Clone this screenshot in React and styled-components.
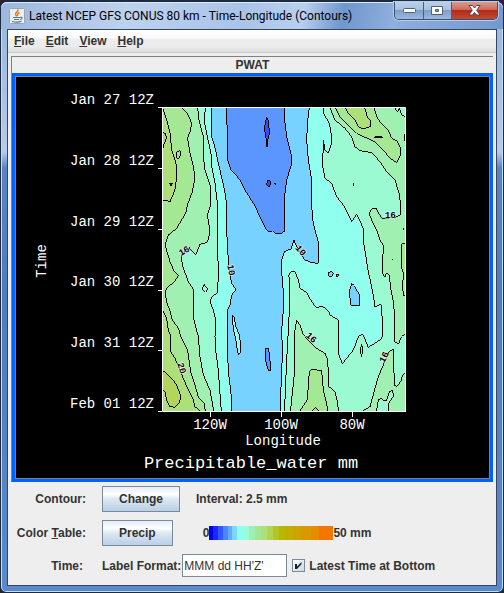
import React from "react";
import styled, { createGlobalStyle } from "styled-components";

const GlobalStyle = createGlobalStyle`
  * { box-sizing: border-box; }
  body { margin: 0; background: #26262c; }
  button, input { font: inherit; color: inherit; }
`;

const WindowFrame = styled.div`
  display: flex;
  flex-direction: column;
  min-height: 100vh;
  padding: 0 6px 6px;
  border: 1px solid #1c2a42;
  border-top-width: 2px;
  border-radius: 8px 8px 6px 6px;
  background: linear-gradient(180deg, #b5cbea 0, #9db9e0 30px, #b3cbea 150px, #5a84c0 166px, #4f7cbd 50%, #5c89ca 100%);
  box-shadow: inset 0 0 0 1px #c5dcf5;
  font: bold 12px/16px "Liberation Sans", Arial, sans-serif;
  color: #333;
`;

const TitleBar = styled.header`
  display: flex;
  align-items: center;
  height: 27px;
  margin: 0 -6px;
  padding-left: 8px;
  border-radius: 6px 6px 0 0;
  background: linear-gradient(100deg, #9db6dd 0%, #bdd2ee 25%, #a9c4e9 48%, #b9cfee 60%, #6f96cf 68%, #8fafdc 78%, #7399cf 100%);
  box-shadow: inset 0 1px 0 #dceafa;
`;

const Title = styled.h1`
  flex: 1;
  margin: 0 0 0 4px;
  overflow: hidden;
  white-space: nowrap;
  font: 12px/16px Roboto, "Noto Sans", sans-serif;
  color: #000;
`;

const WindowButtons = styled.div`
  display: flex;
  align-self: flex-start;
  height: 18px;
  margin-right: 5px;
  overflow: hidden;
  border: 1px solid #39506f;
  border-top: 0;
  border-radius: 0 0 5px 5px;
  box-shadow: 0 0 0 1px #b4cdec;
`;

const WindowButton = styled.button`
  display: flex;
  align-items: center;
  justify-content: center;
  width: ${(p) => (p.$close ? 46 : 28)}px;
  padding: 0;
  border: 0;
  border-left: ${(p) => (p.$first ? "0" : "1px solid #465f83")};
  background: ${(p) =>
    p.$close
      ? "linear-gradient(#dc9b90 0, #cd6a58 45%, #b32a18 50%, #c24b2c 100%)"
      : "linear-gradient(#bdd0e9 0, #a9c0e0 45%, #7f9fca 50%, #9bb9e0 100%)"};
`;

const Client = styled.main`
  display: flex;
  flex: 1;
  flex-direction: column;
  border: 1px solid #33455f;
  background: #eee;
`;

const MenuBar = styled.nav`
  display: flex;
  gap: 11px;
  height: 23px;
  padding: 3px 6px;
  border-bottom: 1px solid #ccc;
  background: linear-gradient(#fff 0, #fafafa 35%, #ededed 45%, #ebebeb 75%, #dedede 100%);
`;

const MenuItem = styled.button`
  padding: 0;
  border: 0;
  background: none;
`;

const Display = styled.section`
  margin: 3px 3px 0;
  border-top: 1px solid #808080;
  border-left: 1px solid #808080;
`;

const DisplayTitle = styled.h2`
  margin: 0;
  font: bold 12px/16px "Liberation Sans", Arial, sans-serif;
  text-align: center;
`;

const PlotFrame = styled.div`
  border: 3px solid #0061ff;
  background: #000;
`;

const PlotInner = styled.div`
  border: 1px solid #808080;
`;

const Plot = styled.svg`
  display: block;
  width: 100%;
  height: auto;
`;

const AxisText = styled.text`
  font: ${(p) => (p.$large ? 17 : 14)}px "Liberation Mono", monospace;
  fill: #fff;
`;

const ContourText = styled.text`
  font: bold 28px "Liberation Mono", monospace;
  text-anchor: middle;
  dominant-baseline: central;
  fill: #000;
  stroke: #fff;
  stroke-width: 3px;
  paint-order: stroke;
`;

const Controls = styled.form`
  display: flex;
  flex-direction: column;
  gap: 8px;
  padding: 4px 3px 7px;
`;

const Row = styled.div`
  display: flex;
  align-items: center;
`;

const RowLabel = styled.div`
  width: 75px;
  padding-right: ${(p) => (p.$inset ? 3 : 0)}px;
  margin-right: 16px;
  text-align: right;
  white-space: nowrap;
`;

const ActionButton = styled.button`
  height: 26px;
  margin-right: ${(p) => (p.$wide ? 16 : 30)}px;
  padding: 0 16px;
  border: 1px solid #7a8a99;
  background: linear-gradient(#e4edf6 0, #fff 30%, #dde8f3 50%, #b8cfe5 100%);
`;

const ColorScale = styled.div`
  width: 124px;
  height: 14px;
  background: linear-gradient(90deg,
    #0000f0 0 4px, #1a28ff 4px 9px, #3058ff 9px 14px, #4a86ff 14px 19px,
    #66aaff 19px 23px, #7cd8ff 23px 28px, #90fff2 28px 34px, #9afcd8 34px 40px,
    #9ff0b0 40px 46px, #a2e795 46px 52px, #aee07a 52px 58px, #b2d452 58px 64px,
    #b5c425 64px 70px, #b8b800 70px 76px, #c2ae00 76px 84px, #cca400 84px 92px,
    #d89800 92px 102px, #e68a00 102px 110px, #f47600 110px);
`;

const FormatInput = styled.input`
  width: 105px;
  height: 23px;
  margin: 0 5px 0 1px;
  padding: 0 1px;
  border: 1px solid #7a8a99;
  background: #fff;
  font-weight: normal;
`;

const CheckLabel = styled.label`
  display: flex;
  align-items: center;
  gap: 4px;
  white-space: nowrap;
`;

const CheckHolder = styled.span`
  display: grid;
  width: 13px;
  height: 13px;
  & > * { grid-area: 1 / 1; }
  svg { pointer-events: none; z-index: 1; }
  input:not(:checked) + svg { display: none; }
`;

const CheckBox = styled.input`
  appearance: none;
  width: 13px;
  height: 13px;
  margin: 0;
  border: 1px solid #7a8a99;
  background: linear-gradient(135deg, #fff, #c6d9ea);
`;

const color = {
  deep: "#3050ff",
  blue: "#5b96ff",
  sky: "#78d2ff",
  cyan: "#91ffee",
  mint: "#9bfad2",
  green: "#a0f0b2",
  leaf: "#a5e893",
  lime: "#aee07a",
  olive: "#b2d65c",
};

// Contour bands, in thirds of a unit from the upper left of the plot area.
const bands = [
  ["leaf", "10,10 80,22 100,45 110,70 105,95 98,115 105,160 115,200 120,235 112,275 97,315 92,340 65,385 40,405 30,435 45,485 58,515 70,527 55,550 38,560 30,575 35,605 47,640 52,660 70,685 78,710 98,750 102,780 108,820 120,855 130,892 148,910 152,945 10,945"],
  ["lime", "10,10 22,22 38,70 45,100 50,150 63,190 65,215 62,260 52,290 45,305 30,300 10,308"],
  ["lime", "10,610 22,630 35,655 40,690 48,710 47,755 60,775 75,810 85,835 100,870 115,900 120,920 137,935 137,945 10,945"],
  ["olive", "10,92 22,95 30,100 35,112 28,130 22,150 10,155"],
  ["olive", "10,804 22,810 50,835 65,855 78,890 72,910 60,922 45,920 35,900 30,875 22,870 10,868"],
  ["mint", "128,10 128,22 132,60 145,110 145,170 150,210 165,255 167,315 157,345 165,395 157,427 135,433 122,465 100,440 78,470 85,505 100,545 117,570 117,660 130,710 135,770 145,825 165,870 172,910 178,945 405,945 413,870 420,800 420,690 425,660 435,675 443,700 460,722 485,745 510,760 518,780 522,860 540,875 547,905 552,945 620,945 625,932 645,920 660,865 670,830 685,795 703,755 715,748 718,855 725,860 737,845 743,825 765,810 765,695 752,700 740,710 730,733 720,725 718,640 715,605 707,565 703,525 695,518 690,532 682,520 685,435 677,425 665,390 650,360 642,340 650,327 665,327 672,342 682,355 720,353 735,345 737,315 732,280 720,240 695,215 675,185 650,158 615,152 600,140 590,110 570,85 540,60 520,10"],
  ["cyan", "152,10 148,65 157,110 168,160 170,200 180,250 188,315 188,465 191,515 187,580 170,590 165,605 175,630 183,665 180,710 182,750 190,810 194,870 200,945 388,945 392,850 395,780 400,690 403,630 402,525 410,513 420,515 430,540 435,565 455,577 470,605 485,625 500,618 510,625 520,632 525,645 550,660 550,760 562,792 575,775 595,750 610,710 623,702 640,742 675,720 682,710 682,660 678,613 660,620 653,575 640,515 627,435 625,385 605,343 590,365 580,345 565,315 545,290 530,250 510,235 503,200 505,120 510,150 520,160 530,130 530,110 523,70 505,40 503,10"],
  ["sky", "170,10 170,110 182,150 190,190 203,245 212,290 215,315 213,375 218,435 220,495 230,550 243,570 230,585 225,615 217,630 217,760 222,830 229,890 229,945 378,945 376,890 380,830 382,750 380,690 385,630 385,575 380,515 380,480 388,455 408,447 417,420 425,440 440,465 450,480 470,488 490,490 490,425 480,390 473,360 470,315 470,240 460,180 455,120 458,60 465,10"],
  ["blue", "215,10 215,60 218,100 218,180 228,210 245,228 255,240 270,270 298,315 315,350 335,390 345,397 352,392 360,400 380,400 390,392 390,280 395,240 410,190 408,160 395,110 390,70 387,10"],
  ["deep", "335,52 341,65 343,100 338,120 336,140 333,115 328,85"],
  ["deep", "337,240 345,242 348,252 342,260 335,256"],
  ["deep", "359,250 362,250 362,253 359,253"],
  ["lime", "66,155 75,152 77,165 70,178 64,170"],
  ["olive", "43,250 53,250 48,257"],
  ["cyan", "148,553 151,560 158,565 152,577 142,567"],
  ["cyan", "232,646 237,650 243,680 254,708 258,755 251,765 247,750 241,710 235,690"],
  ["blue", "333,745 341,747 346,790 346,812 340,812 330,775"],
  ["sky", "590,550 598,557 607,575 615,585 615,618 587,615 583,575"],
  ["sky", "520,518 528,514 535,520 532,529 522,528"],
  ["sky", "545,523 551,523 550,529 544,529"],
  ["leaf", "535,10 555,50 580,75 605,100 630,112 660,125 685,150 705,175 725,187 737,165 735,140 725,122 710,115 700,90 680,72 665,50 653,10"],
  ["lime", "565,10 580,40 600,60 610,80 625,87 645,80 648,65 637,50 625,10"],
  ["lime", "658,112 664,109 682,111 682,114 658,114"],
  ["leaf", "760,428 740,432 740,505 747,525 742,550 745,585 760,590"],
  ["leaf", "435,940 437,930 457,900 463,815 470,807 500,813 505,870 515,910 520,945"],
  ["lime", "470,945 473,930 483,923 492,935"],
  ["mint", "663,945 670,900 680,894 685,902 695,900 703,875 712,870 716,888 700,912 700,945"],
  ["mint", "619,732 623,745 620,770 616,755"],
  ["mint", "717,10 722,30 728,35 733,25 740,45 746,48 765,50 765,10"],
  ["lime", "765,98 747,103 749,122 765,124"],
  ["green", "595,251 596,251 596,256 595,256"],
  ["green", "745,386 746,386 746,388 745,388"],
  ["green", "712,478 713,478 713,480 712,480"],
];

const contourLabels = [
  ["16", 88, 454, -30],
  ["10", 227, 510, 80],
  ["10", 436, 452, 50],
  ["16", 706, 347, 0],
  ["20", 79, 805, 72],
  ["16", 468, 714, 42],
  ["16", 688, 772, -62],
];

const times = ["Jan 27 12Z", "Jan 28 12Z", "Jan 29 12Z", "Jan 30 12Z", "Jan 31 12Z", "Feb 01 12Z"];
const longitudes = [["120W", 210], ["100W", 281], ["80W", 352]];

function ContourPlot() {
  return (
    <Plot viewBox="16 77 473 401" role="img" aria-label="Precipitable water by time and longitude">
      <defs>
        <clipPath id="plot-area">
          <rect x="163" y="108" width="242" height="303" />
        </clipPath>
      </defs>
      <g clipPath="url(#plot-area)">
        <rect x="163" y="107" width="243" height="305" fill={color.green} />
        <g transform="translate(155 100) scale(.333333)" stroke="#000" strokeWidth="3" shapeRendering="crispEdges">
          {bands.map(([band, points], i) => (
            <polygon key={i} points={points} fill={color[band]} />
          ))}
          {contourLabels.map(([value, x, y, angle], i) => (
            <ContourText key={i} transform={`translate(${x} ${y}) rotate(${angle})`}>{value}</ContourText>
          ))}
        </g>
      </g>
      <path
        d="M162.500 107V411.500H406M405.500 411V107.500H158M158 168.500h4M158 229.500h4M158 290.500h4M158 350.500h4M158 411.500h4M210.500 412v5M281.500 412v5M352.500 412v5"
        fill="none"
        stroke="#fff"
      />
      {times.map((time, i) => (
        <AxisText key={time} x="154" y={104 + Math.round(i * 60.800)} textAnchor="end">{time}</AxisText>
      ))}
      {longitudes.map(([name, x]) => (
        <AxisText key={name} x={x} y="429" textAnchor="middle">{name}</AxisText>
      ))}
      <AxisText x="283" y="445" textAnchor="middle">Longitude</AxisText>
      <AxisText x="251" y="468" textAnchor="middle" $large>Precipitable_water mm</AxisText>
      <AxisText transform="translate(46 261) rotate(-90)" textAnchor="middle">Time</AxisText>
    </Plot>
  );
}

function JavaIcon() {
  return (
    <svg width="16" height="16" viewBox="0 0 16 16" aria-hidden="true">
      <rect x=".5" y=".5" width="15" height="15" rx="1" fill="#eceff0" stroke="#9aa5ad" />
      <path d="M8.500 1.500c2 2-3 3-2 5 .5 1 1 1.200 1.300 2M10.500 4.500c-2 1-2.500 2-1.500 3.200" fill="none" stroke="#e9781c" strokeWidth="1.400" />
      <path d="M4 9.500h7M5 11.500h5M3 13.500c3 .8 7 .8 9.500-.2M11 9.500c3-1 2.500 1.800 0 2" fill="none" stroke="#4c7896" strokeWidth="1.100" />
    </svg>
  );
}

export default function App() {
  const [format, setFormat] = React.useState("MMM dd HH'Z'");
  return (
    <>
      <GlobalStyle />
      <WindowFrame>
        <TitleBar>
          <JavaIcon />
          <Title>Latest NCEP GFS CONUS 80 km - Time-Longitude (Contours)</Title>
          <WindowButtons>
            <WindowButton $first aria-label="Minimize">
              <svg width="13" height="6"><rect x=".5" y=".5" width="12" height="4" rx="1" fill="#fff" stroke="#536078" /></svg>
            </WindowButton>
            <WindowButton aria-label="Maximize">
              <svg width="13" height="10"><path d="M.5.5h11v8H.5zM4.500 3.500h3v2h-3z" fill="#fff" fillRule="evenodd" stroke="#536078" /></svg>
            </WindowButton>
            <WindowButton $close aria-label="Close">
              <svg width="13" height="11" viewBox="0 0 13 11"><path d="M1 .5h3.500l2 2.500 2-2.500H12L8.700 5.200 12 10H8.500l-2-2.500-2 2.500H1l3.300-4.800z" fill="#fff" stroke="#59454f" /></svg>
            </WindowButton>
          </WindowButtons>
        </TitleBar>
        <Client>
          <MenuBar>
            {["File", "Edit", "View", "Help"].map((name) => (
              <MenuItem key={name}><u>{name[0]}</u>{name.slice(1)}</MenuItem>
            ))}
          </MenuBar>
          <Display>
            <DisplayTitle>PWAT</DisplayTitle>
            <PlotFrame>
              <PlotInner><ContourPlot /></PlotInner>
            </PlotFrame>
          </Display>
          <Controls onSubmit={(e) => e.preventDefault()}>
            <Row>
              <RowLabel>Contour:</RowLabel>
              <ActionButton type="button" $wide>Change</ActionButton>
              <span>Interval: 2.5 mm</span>
            </Row>
            <Row>
              <RowLabel>Color <u>T</u>able:</RowLabel>
              <ActionButton type="button">Precip</ActionButton>
              <span>0</span>
              <ColorScale />
              <span>50 mm</span>
            </Row>
            <Row>
              <RowLabel $inset>Time:</RowLabel>
              <label htmlFor="label-format">Label Format:</label>
              <FormatInput id="label-format" value={format} onChange={(e) => setFormat(e.target.value)} />
              <CheckLabel>
                <CheckHolder>
                  <CheckBox type="checkbox" defaultChecked />
                  <svg width="13" height="13"><path d="M3 5h2v2.500L9.500 3v2.300L5 10H3z" fill="#222" /></svg>
                </CheckHolder>
                Latest Time at Bottom
              </CheckLabel>
            </Row>
          </Controls>
        </Client>
      </WindowFrame>
    </>
  );
}
